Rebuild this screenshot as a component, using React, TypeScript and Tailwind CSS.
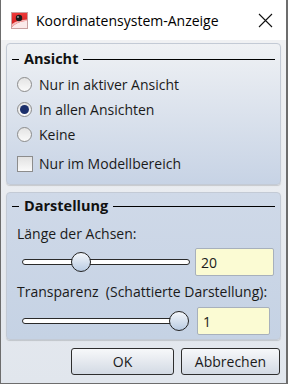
import React from 'react';

const font = { fontFamily: '"Open Sans", "Noto Sans", sans-serif' };

const AppIcon = () => (
    <svg width="17" height="17" viewBox="0 0 17 17">
        <defs>
            <linearGradient id="ig" x1="0" y1="0" x2="0" y2="1">
                <stop offset="0" stopColor="#f03a3a" />
                <stop offset="1" stopColor="#c81818" />
            </linearGradient>
        </defs>
        <rect x="0.5" y="0.5" width="16" height="16" fill="url(#ig)" stroke="#c9a0a0" />
        <path d="M1 15 C6 10 11 9 16 9 L16 16 L1 16 Z" fill="#fbeaea" />
        <path d="M1 12 C5 9 10 8 16 7.5 L16 9 C11 9 6 10 1 15 Z" fill="#f6b9b9" />
        <circle cx="8" cy="6" r="3.2" fill="#1b1b1b" />
        <circle cx="7" cy="5" r="1" fill="#9a9a9a" />
    </svg>
);

const GroupHeader = ({ title }: { title: string }) => (
    <div className="flex items-center h-[20px]">
        <div className="w-[7px] h-px bg-black ml-[5px]" />
        <div className="ml-[5px] text-[14.5px] font-bold text-[#111]">{title}</div>
        <div className="flex-1 h-px bg-black ml-[5px] mr-[5px]" />
    </div>
);

const Radio = ({ label, checked }: { label: string; checked?: boolean }) => (
    <div className="flex items-center h-[25px]">
        <div className="w-[15px] h-[15px] rounded-full border border-[#8c8c8c] bg-gradient-to-b from-[#e4e4e4] to-[#fafafa] flex items-center justify-center">
            {checked && <div className="w-[9px] h-[9px] rounded-full bg-[#1b2f6b]" />}
        </div>
        <span className="ml-[7px] text-[14px] text-[#1a1a1a]">{label}</span>
    </div>
);

const Slider = ({ width, thumb }: { width: number; thumb: number }) => (
    <div className="relative h-[20px]" style={{ width }}>
        <div className="absolute left-0 right-0 top-[7px] h-[6px] rounded-full border border-[#2a2a2a] bg-white" />
        <div
            className="absolute top-0 w-[20px] h-[20px] rounded-full border border-[#222] bg-gradient-to-b from-[#f4f7fb] to-[#b9cbe2]"
            style={{ left: thumb - 10 }}
        />
    </div>
);

const Field = ({ value, w }: { value: string; w: number }) => (
    <div
        className="h-[28px] border border-[#a7b0bc] rounded-[2px] bg-[#fbfbd3] flex items-center pl-[5px] text-[14px] text-[#1a1a1a]"
        style={{ width: w }}
    >
        {value}
    </div>
);

const Button = ({ label, w }: { label: string; w: number }) => (
    <div
        className="h-[27px] rounded-[3px] border border-[#2e2e2e] bg-gradient-to-b from-[#f7f8fa] to-[#d3dae4] flex items-center justify-center text-[14px] text-[#1a1a1a]"
        style={{ width: w }}
    >
        {label}
    </div>
);

export default function App() {
    return (
        <div className="w-[288px] h-[384px] flex flex-col border-l border-b border-r-2 border-[#6d6d6d] overflow-hidden" style={font}>
            <div className="h-[40px] bg-white flex items-center shrink-0">
                <div className="ml-[10px] mt-[1px]"><AppIcon /></div>
                <div className="ml-[8px] text-[14px] text-black">Koordinatensystem-Anzeige</div>
                <div className="ml-auto mr-[13px]">
                    <svg width="15" height="15" viewBox="0 0 15 15">
                        <path d="M1 1 L14 14 M14 1 L1 14" stroke="#111" strokeWidth="1.1" />
                    </svg>
                </div>
            </div>
            <div className="flex-1 flex flex-col px-[5px] pt-[3px] bg-gradient-to-b from-[#f0f1f3] to-[#e1e6ed]">
                <div className="h-[142px] rounded-[4px] border border-[#c3cad5] bg-gradient-to-b from-[#eff1f4] to-[#c7d3e5] pt-[5px] shadow-[0_1px_1px_rgba(0,0,0,0.15)]">
                    <GroupHeader title="Ansicht" />
                    <div className="pl-[10px] mt-[3px]">
                        <Radio label="Nur in aktiver Ansicht" />
                        <Radio label="In allen Ansichten" checked />
                        <Radio label="Keine" />
                        <div className="flex items-center h-[25px] mt-[4px]">
                            <div className="w-[16px] h-[16px] border border-[#8c8c8c] bg-gradient-to-b from-[#e2e2e2] to-[#fafafa]" />
                            <span className="ml-[6px] text-[14px] text-[#1a1a1a]">Nur im Modellbereich</span>
                        </div>
                    </div>
                </div>
                <div className="h-[148px] mt-[7px] rounded-[4px] border border-[#c3cad5] bg-gradient-to-b from-[#cfd9e8] to-[#c5d2e4] pt-[3px] shadow-[0_1px_1px_rgba(0,0,0,0.15)]">
                    <GroupHeader title="Darstellung" />
                    <div className="pl-[10px] mt-[8px] text-[14px] text-[#1a1a1a] h-[20px] leading-[20px]">Länge der Achsen:</div>
                    <div className="flex items-center mt-[4px] pl-[15px]">
                        <Slider width={168} thumb={59} />
                        <div className="ml-[5px]"><Field value="20" w={79} /></div>
                    </div>
                    <div className="pl-[10px] mt-[6px] text-[14px] text-[#1a1a1a] h-[20px] leading-[20px] whitespace-pre">Transparenz  (Schattierte Darstellung):</div>
                    <div className="flex items-center mt-[5px] pl-[15px]">
                        <Slider width={163} thumb={157} />
                        <div className="ml-[12px]"><Field value="1" w={73} /></div>
                    </div>
                </div>
                <div className="flex justify-end gap-[7px] mt-[8px] pr-[1px]">
                    <Button label="OK" w={103} />
                    <Button label="Abbrechen" w={99} />
                </div>
            </div>
        </div>
    );
}
